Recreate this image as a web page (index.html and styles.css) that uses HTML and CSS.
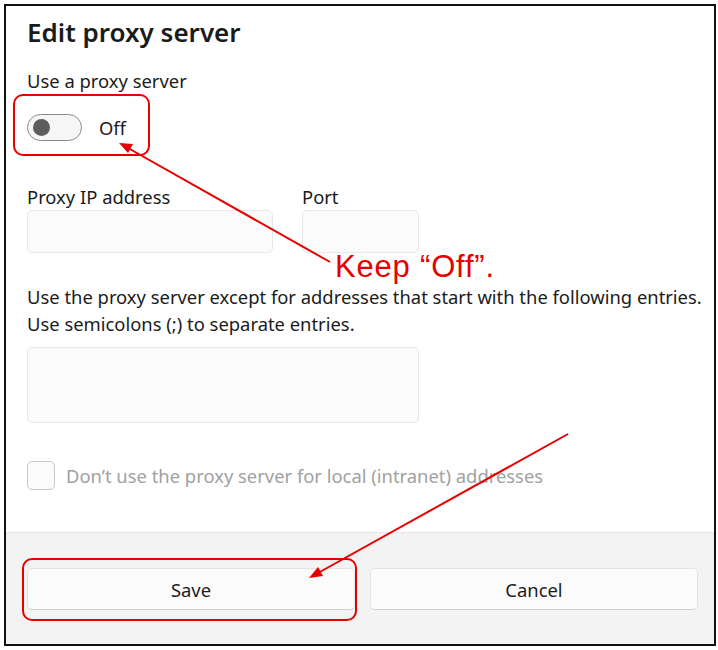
FILE: index.html
```html
<!DOCTYPE html>
<html>
<head>
<meta charset="utf-8">
<link rel="stylesheet" href="styles.css">
</head>
<body>
<div class="frame">
  <div class="dialog">
    <div class="content">
      <h1 class="title">Edit proxy server</h1>
      <div class="label use">Use a proxy server</div>
      <div class="toggle-row">
        <span class="toggle"><span class="knob"></span></span>
        <span class="toggle-text">Off</span>
      </div>
      <div class="fields">
        <div class="field">
          <div class="label">Proxy IP address</div>
          <div class="input ip"></div>
        </div>
        <div class="field">
          <div class="label">Port</div>
          <div class="input port"></div>
        </div>
      </div>
      <p class="desc">Use the proxy server except for addresses that start with the following entries.<br>Use semicolons (;) to separate entries.</p>
      <div class="input area"></div>
      <div class="check-row">
        <span class="checkbox"></span>
        <span class="check-text">Don’t use the proxy server for local (intranet) addresses</span>
      </div>
    </div>
    <div class="footer">
      <button class="btn">Save</button>
      <button class="btn">Cancel</button>
    </div>
  </div>
  <div class="hl hl-toggle"></div>
  <div class="hl hl-save"></div>
  <div class="note">Keep “Off”.</div>
  <svg class="arrows" width="718" height="650" viewBox="0 0 718 650">
    <line x1="330" y1="262" x2="128" y2="148" stroke="#e60000" stroke-width="2"/>
    <polygon points="119,143 133,144 128,153" fill="#e60000"/>
    <line x1="568" y1="434" x2="318" y2="573" stroke="#e60000" stroke-width="2"/>
    <polygon points="309,578 318,567 323,576" fill="#e60000"/>
  </svg>
</div>
</body>
</html>
```
FILE: styles.css
```css
* { box-sizing: border-box; }
html, body { margin: 0; padding: 0; background: #fff; }
body { font-family: "Noto Sans", "Open Sans", sans-serif; color: #1b1b1b; }
.frame {
  position: relative;
  width: 718px;
  height: 650px;
  padding: 4px 2px 4px 4px;
}
.dialog {
  width: 712px;
  height: 642px;
  border: 2px solid #111;
  display: flex;
  flex-direction: column;
  background: #fff;
}
.content {
  flex: 1;
  padding: 9px 0 0 21px;
}
.title {
  margin: 0;
  font-size: 26px;
  font-weight: 600;
  line-height: 34px;
}
.label {
  font-size: 18.4px;
  line-height: 26px;
}
.use { margin-top: 19px; }
.toggle-row {
  display: flex;
  align-items: center;
  margin-top: 19px;
  height: 28px;
}
.toggle {
  width: 55px;
  height: 27px;
  border: 1px solid #8a8a8a;
  border-radius: 14px;
  background: #f6f6f6;
  display: flex;
  align-items: center;
  padding-left: 5px;
}
.knob {
  width: 17px;
  height: 17px;
  border-radius: 50%;
  background: #5d5d5d;
}
.toggle-text {
  margin-left: 17px;
  font-size: 18.4px;
}
.fields {
  display: flex;
  gap: 29px;
  margin-top: 43px;
}
.input {
  background: #fbfbfb;
  border: 1px solid #e8e8e8;
  border-radius: 5px;
}
.ip { width: 246px; height: 43px; }
.port { width: 117px; height: 43px; }
.desc {
  margin: 30px 0 0;
  font-size: 18.4px;
  line-height: 27px;
}
.area {
  width: 392px;
  height: 76px;
  margin-top: 10px;
}
.check-row {
  display: flex;
  align-items: center;
  margin-top: 38px;
}
.checkbox {
  width: 28px;
  height: 29px;
  border: 1px solid #c9c9c9;
  border-radius: 5px;
  background: #fbfbfb;
}
.check-text {
  margin-left: 11px;
  font-size: 18.4px;
  color: #a1a1a1;
}
.footer {
  height: 112px;
  background: #f3f3f3;
  border-top: 1px solid #e6e6e6;
  display: flex;
  gap: 15px;
  padding: 35px 16px 0 21px;
}
.btn {
  flex: 1;
  height: 42px;
  border: 1px solid #e3e3e3;
  border-bottom-color: #cfcfcf;
  border-radius: 5px;
  background: #fbfbfb;
  font-family: inherit;
  font-size: 18.4px;
  color: #1b1b1b;
}
.hl {
  position: absolute;
  border: 2px solid #e60000;
  border-radius: 10px;
}
.hl-toggle { left: 13px; top: 94px; width: 137px; height: 62px; }
.hl-save { left: 22px; top: 558px; width: 335px; height: 63px; }
.note {
  position: absolute;
  left: 335px;
  top: 253px;
  font-family: "Liberation Sans", Arial, sans-serif;
  font-size: 31px;
  letter-spacing: 0.8px;
  color: #e60000;
  line-height: 28px;
}
.arrows { position: absolute; left: 0; top: 0; pointer-events: none; }
```
